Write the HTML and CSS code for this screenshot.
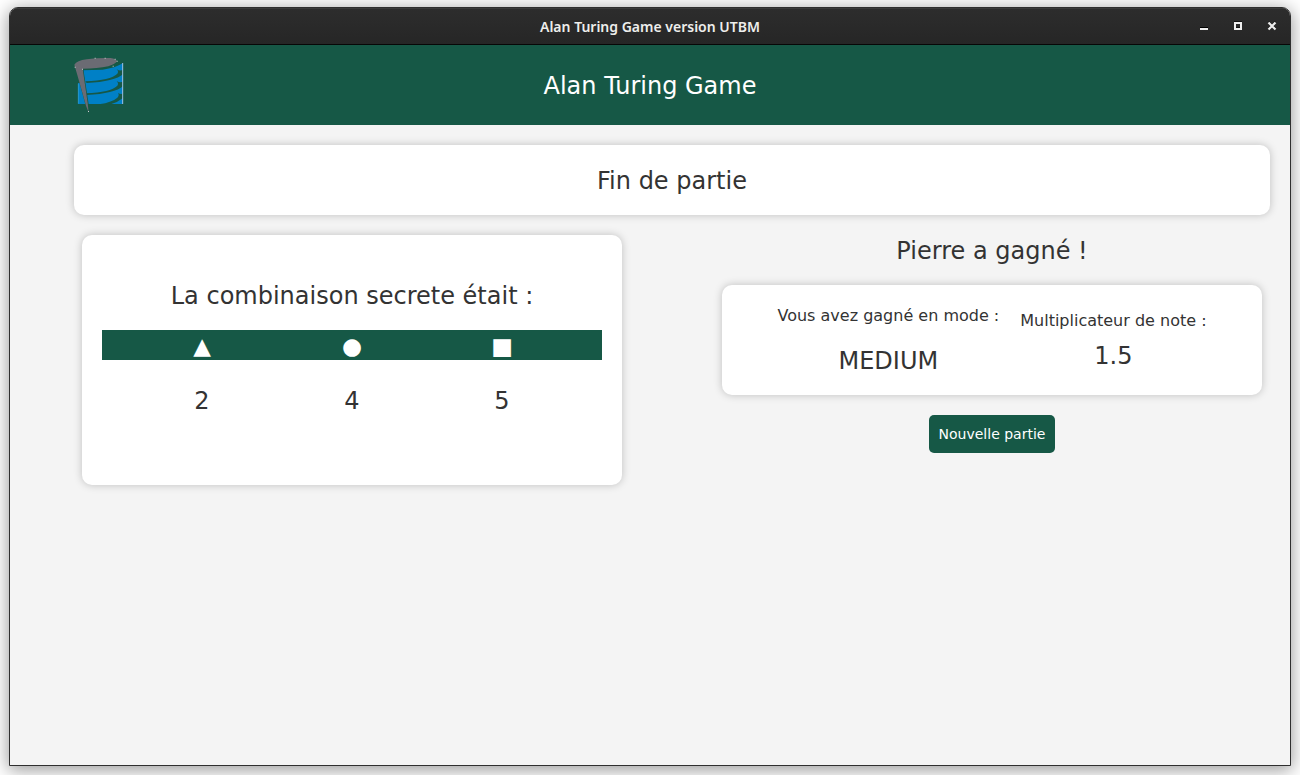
FILE: index.html
```html
<!DOCTYPE html>
<html lang="fr">
<head>
<meta charset="utf-8">
<title>Alan Turing Game version UTBM</title>
<link rel="stylesheet" href="styles.css">
</head>
<body>
<div class="window">
  <div class="titlebar">
    <span class="titlebar-text">Alan Turing Game version UTBM</span>
    <div class="controls">
      <button class="control" type="button" aria-label="Réduire">
        <svg width="10" height="10" viewBox="0 0 10 10" shape-rendering="crispEdges"><path d="M1 7h8v2H1z" fill="#eee"/><path d="M1 6h8v1H1z" fill="#000"/></svg>
      </button>
      <button class="control" type="button" aria-label="Agrandir">
        <svg width="10" height="10" viewBox="0 0 10 10" shape-rendering="crispEdges"><path d="M1 0h8v1H1zM3 7h4v-1H3z" fill="#111"/><path d="M1 1h8v8H1zM3 3v4h4V3z" fill="#eee" fill-rule="evenodd"/></svg>
      </button>
      <button class="control" type="button" aria-label="Fermer">
        <svg width="10" height="10" viewBox="0 0 10 10"><path d="M1.500 .8l7 7M8.500 .8l-7 7" stroke="#111" stroke-width="2"/><path d="M1.500 1.500l7 7M8.500 1.500l-7 7" stroke="#eee" stroke-width="2.200"/></svg>
      </button>
    </div>
  </div>
  <header class="header">
    <svg class="logo" viewBox="0 0 240 240" role="img" aria-label="UTBM">
      <path d="M54 114H189V177H54z" fill="#0080c6"/>
      <path d="M69 76L128 74Q166 69 189 54V177H84z" fill="#0080c6"/>
      <path d="M55 116V176" stroke="#3fa0c8" stroke-width="2"/>
      <g fill="#165846">
        <path d="M76 109Q152 106 172 86Q177 79 170 73Q182 80 190 73V87Q164 110 80 114z"/>
        <path d="M78 145Q152 142 172 122Q177 115 170 108Q182 116 190 108V123Q164 146 80 150z"/>
        <path d="M117 178Q158 171 172 158Q179 151 174 143Q183 151 190 144V158Q174 171 152 178z"/>
        <path d="M58 112H65L80 178H76z"/>
        <path d="M66 72H70L86 178H81z"/>
      </g>
      <path d="M188 54V177" stroke="#9fbfe0" stroke-width="3"/>
      <path d="M43 59Q50 47 80 43Q112 38 152 39Q168 41 171 49Q167 57 145 64Q112 71 68 71L83 174L86 203L78 182Q58 110 43 59z" fill="#6b6b73"/>
      <g fill="#c9cfd0">
        <path d="M104 38h3v3h-3zM134 38h3v3h-3zM164 41h3v3h-3zM170 47h3v3h-3zM44 65h3v3h-3zM66 71h3v3h-3zM84 198h3v3h-3zM158 62h3v3h-3z"/>
      </g>
    </svg>
    <h1 class="heading">Alan Turing Game</h1>
  </header>
  <main class="main">
    <section class="card banner"><h2 class="heading">Fin de partie</h2></section>
    <div class="columns">
      <section class="card secret">
        <h2 class="heading">La combinaison secrete était :</h2>
        <table class="code">
          <thead><tr><th scope="col">▲</th><th scope="col">●</th><th scope="col">■</th></tr></thead>
          <tbody><tr><td>2</td><td>4</td><td>5</td></tr></tbody>
        </table>
      </section>
      <section class="result">
        <h2 class="heading">Pierre a gagné !</h2>
        <div class="card score">
          <div class="stat stat-mode">
            <span class="label">Vous avez gagné en mode :</span>
            <span class="heading">MEDIUM</span>
          </div>
          <div class="stat">
            <span class="label">Multiplicateur de note :</span>
            <span class="heading">1.5</span>
          </div>
        </div>
        <button class="primary" type="button">Nouvelle partie</button>
      </section>
    </div>
  </main>
</div>
</body>
</html>
```
FILE: styles.css
```css
* {
  box-sizing: border-box;
}

body {
  display: flex;
  min-height: 100vh;
  margin: 0;
  padding: 7px 9px 9px;
  background: #fff;
  color: #333;
  font-family: "DejaVu Sans", sans-serif;
}

.window {
  display: flex;
  flex: 1;
  flex-direction: column;
  border: 1px solid #2f2f2f;
  border-radius: 9px 9px 0 0;
  background: #f4f4f4;
  box-shadow: 0 3px 18px 1px rgba(0, 0, 0, 0.4);
  overflow: hidden;
}

.titlebar {
  display: grid;
  grid-template-columns: 1fr auto 1fr;
  align-items: center;
  height: 37px;
  padding: 0 13px;
  border-bottom: 1px solid #070707;
  background: linear-gradient(#2d2d2d, #262626);
  box-shadow: inset 0 1px #3b3b3b;
}

.titlebar-text {
  grid-column: 2;
  padding-top: 2px;
  color: #eeeeec;
  font: 600 14px/20px "Noto Sans", sans-serif;
}

.controls {
  display: flex;
  gap: 24px;
  justify-self: end;
}

.control {
  display: block;
  width: 10px;
  height: 10px;
  padding: 0;
  border: 0;
  background: none;
}

.control svg {
  display: block;
}

.header {
  display: grid;
  grid-template-columns: 1fr auto 1fr;
  align-items: center;
  padding: 0 50px;
  background: #165846;
  color: #fff;
}

.logo {
  display: block;
  width: 80px;
  height: 80px;
}

.heading {
  margin: 0;
  padding-top: 2px;
  font-size: 24px;
  font-weight: normal;
  line-height: 28px;
  text-align: center;
}

.main {
  display: flex;
  flex-direction: column;
  gap: 20px;
  padding: 20px 20px 20px 64px;
}

.card {
  border-radius: 10px;
  background: #fff;
  box-shadow: 0 0 8px rgba(0, 0, 0, 0.22);
}

.banner {
  padding: 20px;
}

.columns {
  display: grid;
  grid-template-columns: 1fr 1fr;
  align-items: start;
  gap: 100px;
  padding: 0 8px;
}

.secret {
  display: flex;
  flex-direction: column;
  gap: 20px;
  padding: 45px 20px;
}

.code {
  width: 100%;
  border-collapse: collapse;
  table-layout: fixed;
  font-size: 24px;
  line-height: 28px;
  text-align: center;
}

.code th,
.code td {
  width: 30%;
  padding: 2px 0 0;
  font-weight: normal;
}

.code th {
  background: #165846;
  color: #fff;
  font-size: 23px;
}

.code td {
  padding: 27px 0 25px;
}

.code th:first-child,
.code td:first-child {
  width: 35%;
  padding-left: 25px;
}

.code th:last-child,
.code td:last-child {
  width: 35%;
  padding-right: 25px;
}

.result {
  display: flex;
  flex-direction: column;
  align-items: center;
  gap: 20px;
}

.score {
  display: flex;
  align-items: center;
  align-self: stretch;
  justify-content: center;
  gap: 21px;
  padding: 20px;
}

.stat {
  display: flex;
  flex-direction: column;
  align-items: center;
  gap: 10px;
}

.stat-mode {
  gap: 20px;
}

.label {
  padding-top: 2px;
  font-size: 16px;
  line-height: 18px;
}

.primary {
  padding: 10px;
  border: 0;
  border-radius: 5px;
  background: #165846;
  color: #fff;
  font: 14px/18px "DejaVu Sans", sans-serif;
}
```
